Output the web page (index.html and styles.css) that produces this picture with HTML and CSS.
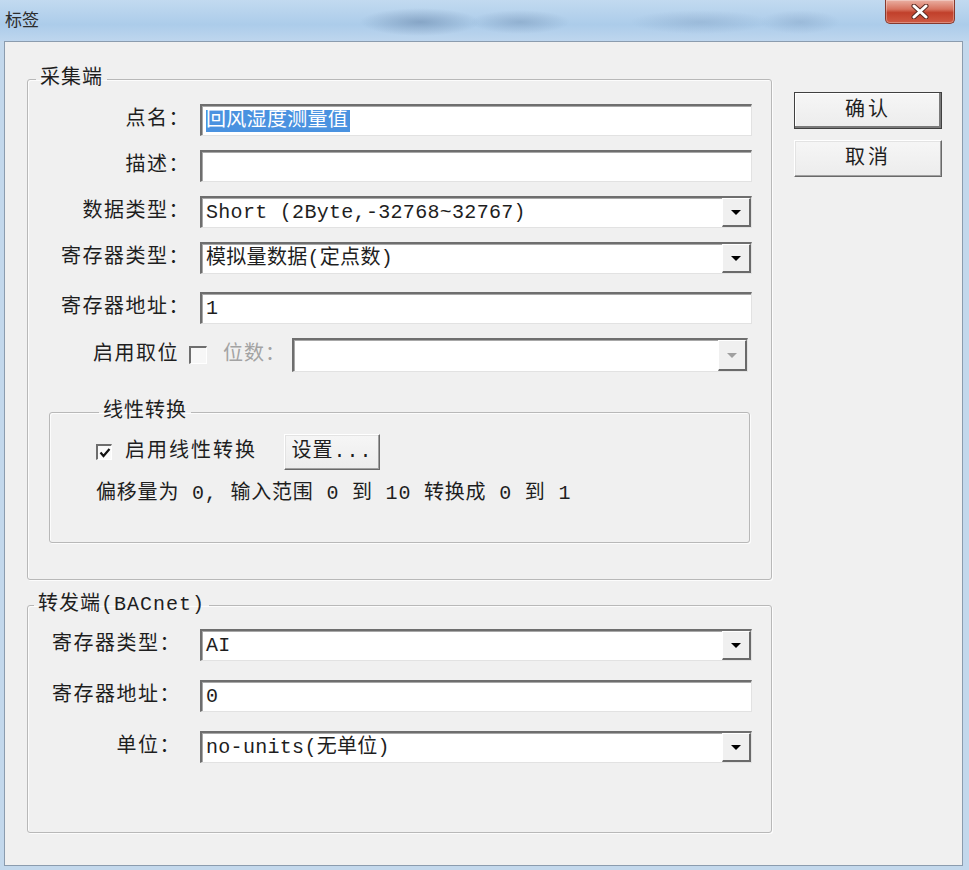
FILE: index.html
```html
<!DOCTYPE html>
<html lang="zh-CN">
<head>
    <meta charset="UTF-8">
    <title>标签</title>
    <link rel="stylesheet" href="styles.css">
</head>
<body>
<div class="window">
    <div class="titlebar">
        <span class="title">标签</span>
        <div class="close-btn">
            <svg width="18" height="15" viewBox="0 0 18 15">
                <path d="M3 2 L15 13 M15 2 L3 13" stroke="#5a2a22" stroke-width="5" stroke-linecap="round"/>
                <path d="M3 2 L15 13 M15 2 L3 13" stroke="#ffffff" stroke-width="3" stroke-linecap="round"/>
            </svg>
        </div>
    </div>

    <div class="client">
        <div class="main">
            <fieldset class="group group-source">
                <legend>采集端</legend>

                <div class="row">
                    <span class="label">点名：</span>
                    <div class="field"><span class="value selected">回风湿度测量值</span></div>
                </div>
                <div class="row">
                    <span class="label">描述：</span>
                    <div class="field"></div>
                </div>
                <div class="row">
                    <span class="label">数据类型：</span>
                    <div class="field combo">
                        <span class="value">Short (2Byte,-32768~32767)</span>
                        <span class="drop"><i class="arrow"></i></span>
                    </div>
                </div>
                <div class="row">
                    <span class="label">寄存器类型：</span>
                    <div class="field combo">
                        <span class="value">模拟量数据(定点数)</span>
                        <span class="drop"><i class="arrow"></i></span>
                    </div>
                </div>
                <div class="row row-addr">
                    <span class="label">寄存器地址：</span>
                    <div class="field"><span class="value">1</span></div>
                </div>
                <div class="row row-bits">
                    <span class="label">启用取位</span>
                    <span class="check"></span>
                    <span class="muted">位数：</span>
                    <div class="field combo disabled">
                        <span class="value"></span>
                        <span class="drop"><i class="arrow"></i></span>
                    </div>
                </div>

                <fieldset class="group group-linear">
                    <legend>线性转换</legend>
                    <div class="linear-row">
                        <span class="check checked">
                            <svg width="12" height="12" viewBox="0 0 12 12">
                                <path d="M1.5 5.5 L4.5 9 L10.5 2" fill="none" stroke="#111" stroke-width="2.2"/>
                            </svg>
                        </span>
                        <span class="check-text">启用线性转换</span>
                        <button class="btn btn-small">设置...</button>
                    </div>
                    <p class="summary">偏移量为 0, 输入范围 0 到 10 转换成 0 到 1</p>
                </fieldset>
            </fieldset>

            <fieldset class="group group-target">
                <legend>转发端(BACnet)</legend>

                <div class="row">
                    <span class="label">寄存器类型：</span>
                    <div class="field combo">
                        <span class="value">AI</span>
                        <span class="drop"><i class="arrow"></i></span>
                    </div>
                </div>
                <div class="row">
                    <span class="label">寄存器地址：</span>
                    <div class="field"><span class="value">0</span></div>
                </div>
                <div class="row">
                    <span class="label">单位：</span>
                    <div class="field combo">
                        <span class="value">no-units(无单位)</span>
                        <span class="drop"><i class="arrow"></i></span>
                    </div>
                </div>
            </fieldset>
        </div>

        <div class="actions">
            <button class="btn btn-default">确认</button>
            <button class="btn">取消</button>
        </div>
    </div>
</div>
</body>
</html>
```

FILE: styles.css
```css
* {
    box-sizing: border-box;
}

body {
    margin: 0;
    width: 969px;
    height: 870px;
    overflow: hidden;
    background: #c3d8ec;
    font-family: "Liberation Mono", "Noto Sans CJK SC", monospace;
    font-size: 20px;
    line-height: 22px;
    color: #1e1e1e;
}

.window {
    height: 870px;
    display: flex;
    flex-direction: column;
}

/* title bar */
.titlebar {
    height: 41px;
    flex: none;
    display: flex;
    justify-content: space-between;
    align-items: flex-start;
    padding: 0 11px 0 5px;
    background:
        radial-gradient(ellipse 60px 14px at 420px 22px, rgba(60, 90, 130, 0.35), transparent),
        radial-gradient(ellipse 50px 12px at 520px 22px, rgba(60, 90, 130, 0.25), transparent),
        radial-gradient(ellipse 70px 12px at 700px 22px, rgba(80, 110, 150, 0.2), transparent),
        radial-gradient(ellipse 40px 12px at 800px 22px, rgba(80, 110, 150, 0.2), transparent),
        linear-gradient(180deg, #c2daf0 0%, #acccea 60%, #bed6ee 100%);
}

.title {
    font-family: "Noto Sans CJK SC", sans-serif;
    font-size: 17px;
    line-height: 20px;
    margin-top: 9px;
    color: #2c2c2c;
}

.close-btn {
    width: 70px;
    height: 24px;
    margin-right: 3px;
    display: flex;
    align-items: center;
    justify-content: center;
    border: 1px solid #86392d;
    border-top: none;
    border-radius: 0 0 5px 5px;
    background: linear-gradient(180deg, #eab0a3 0%, #d7735f 40%, #c1402b 55%, #cf5a43 100%);
    box-shadow: inset 0 0 0 1px rgba(255, 255, 255, 0.3);
}

/* client area */
.client {
    height: 825px;
    flex: none;
    margin: 0 6px 0 4px;
    border: 1px solid #8b9cae;
    background: #f0f0f0;
    display: flex;
    align-items: flex-start;
    gap: 22px;
    padding: 26px 0 0 22px;
}

.main {
    width: 745px;
    flex: none;
}

/* group boxes */
.group {
    margin: 0;
    padding: 0;
    min-width: 0;
    border: 1px solid #b8b8b8;
    border-radius: 3px;
    box-shadow: inset 1px 1px 0 #fcfcfc, 1px 1px 0 #fcfcfc;
}

.group legend {
    padding: 0 4px;
    margin-left: 8px;
    letter-spacing: 1px;
    line-height: 22px;
}

.group-source {
    padding: 14px 0 36px 0;
}

.group-target {
    margin-top: 14px;
    padding: 13px 0 69px 0;
}

.group-target legend {
    margin-left: 6px;
}

.group-linear {
    margin: 29px 21px 0 21px;
    padding: 11px 0 37px 46px;
}

.group-linear legend {
    margin-left: 3px;
}

/* rows */
.row {
    display: flex;
    align-items: center;
    height: 32px;
    margin-right: 19px;
}

.row + .row {
    margin-top: 14px;
}

.group-target .row + .row {
    margin-top: 19px;
}

.row-addr {
    margin-top: 18px !important;
}

.label {
    width: 162px;
    flex: none;
    margin-right: 10px;
    text-align: right;
    letter-spacing: 1.5px;
    white-space: nowrap;
}

.group-target .label {
    width: 153px;
    margin-right: 19px;
}

.row-bits {
    height: 34px;
    margin-right: 23px;
}

.row-bits .label {
    width: 151px;
    margin-right: 10px;
}

.muted {
    color: #a3a3a3;
    letter-spacing: 1px;
    margin-left: 16px;
    margin-right: 6px;
    white-space: nowrap;
}

/* edit / combo fields */
.field {
    flex: 1;
    align-self: stretch;
    display: flex;
    align-items: center;
    background: #fff;
    border-top: 2px solid #6e6e6e;
    border-left: 2px solid #6e6e6e;
    border-right: 1px solid #e2e2e2;
    border-bottom: 1px solid #e2e2e2;
    box-shadow: inset 1px 1px 0 #a8a8a8;
    padding-left: 4px;
    overflow: hidden;
}

.value {
    white-space: nowrap;
    letter-spacing: 0.3px;
}

.selected {
    background: #4a92e0;
    color: #fff;
    padding-right: 2px;
}

.combo .value {
    flex: 1;
}

.drop {
    width: 29px;
    align-self: stretch;
    display: flex;
    align-items: center;
    justify-content: center;
    background: #f0f0f0;
    border-top: 1px solid #fff;
    border-left: 1px solid #fff;
    border-right: 2px solid #6a6a6a;
    border-bottom: 2px solid #6a6a6a;
}

.arrow {
    width: 0;
    height: 0;
    border-left: 5px solid transparent;
    border-right: 5px solid transparent;
    border-top: 5px solid #000;
}

.disabled .arrow {
    border-top-color: #a0a0a0;
}

/* check boxes */
.check {
    width: 18px;
    height: 18px;
    flex: none;
    display: flex;
    align-items: center;
    justify-content: center;
    background: #f7f7f7;
    border-top: 2px solid #6e6e6e;
    border-left: 2px solid #6e6e6e;
    border-right: 1px solid #ffffff;
    border-bottom: 1px solid #ffffff;
}

.check.checked {
    width: 16px;
    height: 16px;
    background: #fafafa;
}

.linear-row {
    display: flex;
    align-items: center;
    height: 36px;
}

.check-text {
    margin-left: 13px;
    letter-spacing: 2px;
}

.summary {
    margin: 13px 0 0 0;
    letter-spacing: 0.8px;
}

/* buttons */
.btn {
    font: inherit;
    color: #1e1e1e;
    letter-spacing: 1px;
    background: linear-gradient(180deg, #f6f6f6 0%, #ececec 100%);
    border: 1px solid;
    border-color: #ffffff #696969 #696969 #ffffff;
    box-shadow: inset -1px -1px 0 #a0a0a0, inset 1px 1px 0 #e3e3e3;
    padding: 0;
    cursor: default;
}

.btn-small {
    width: 96px;
    height: 36px;
    margin-left: 27px;
}

.actions {
    width: 148px;
    flex: none;
    margin-top: 24px;
    display: flex;
    flex-direction: column;
    gap: 11px;
}

.actions .btn {
    height: 37px;
    letter-spacing: 3px;
}

.btn-default {
    border: 1px solid #404040;
    box-shadow: inset -2px -2px 0 #7a7a7a, inset 1px 1px 0 #ffffff;
}
```
